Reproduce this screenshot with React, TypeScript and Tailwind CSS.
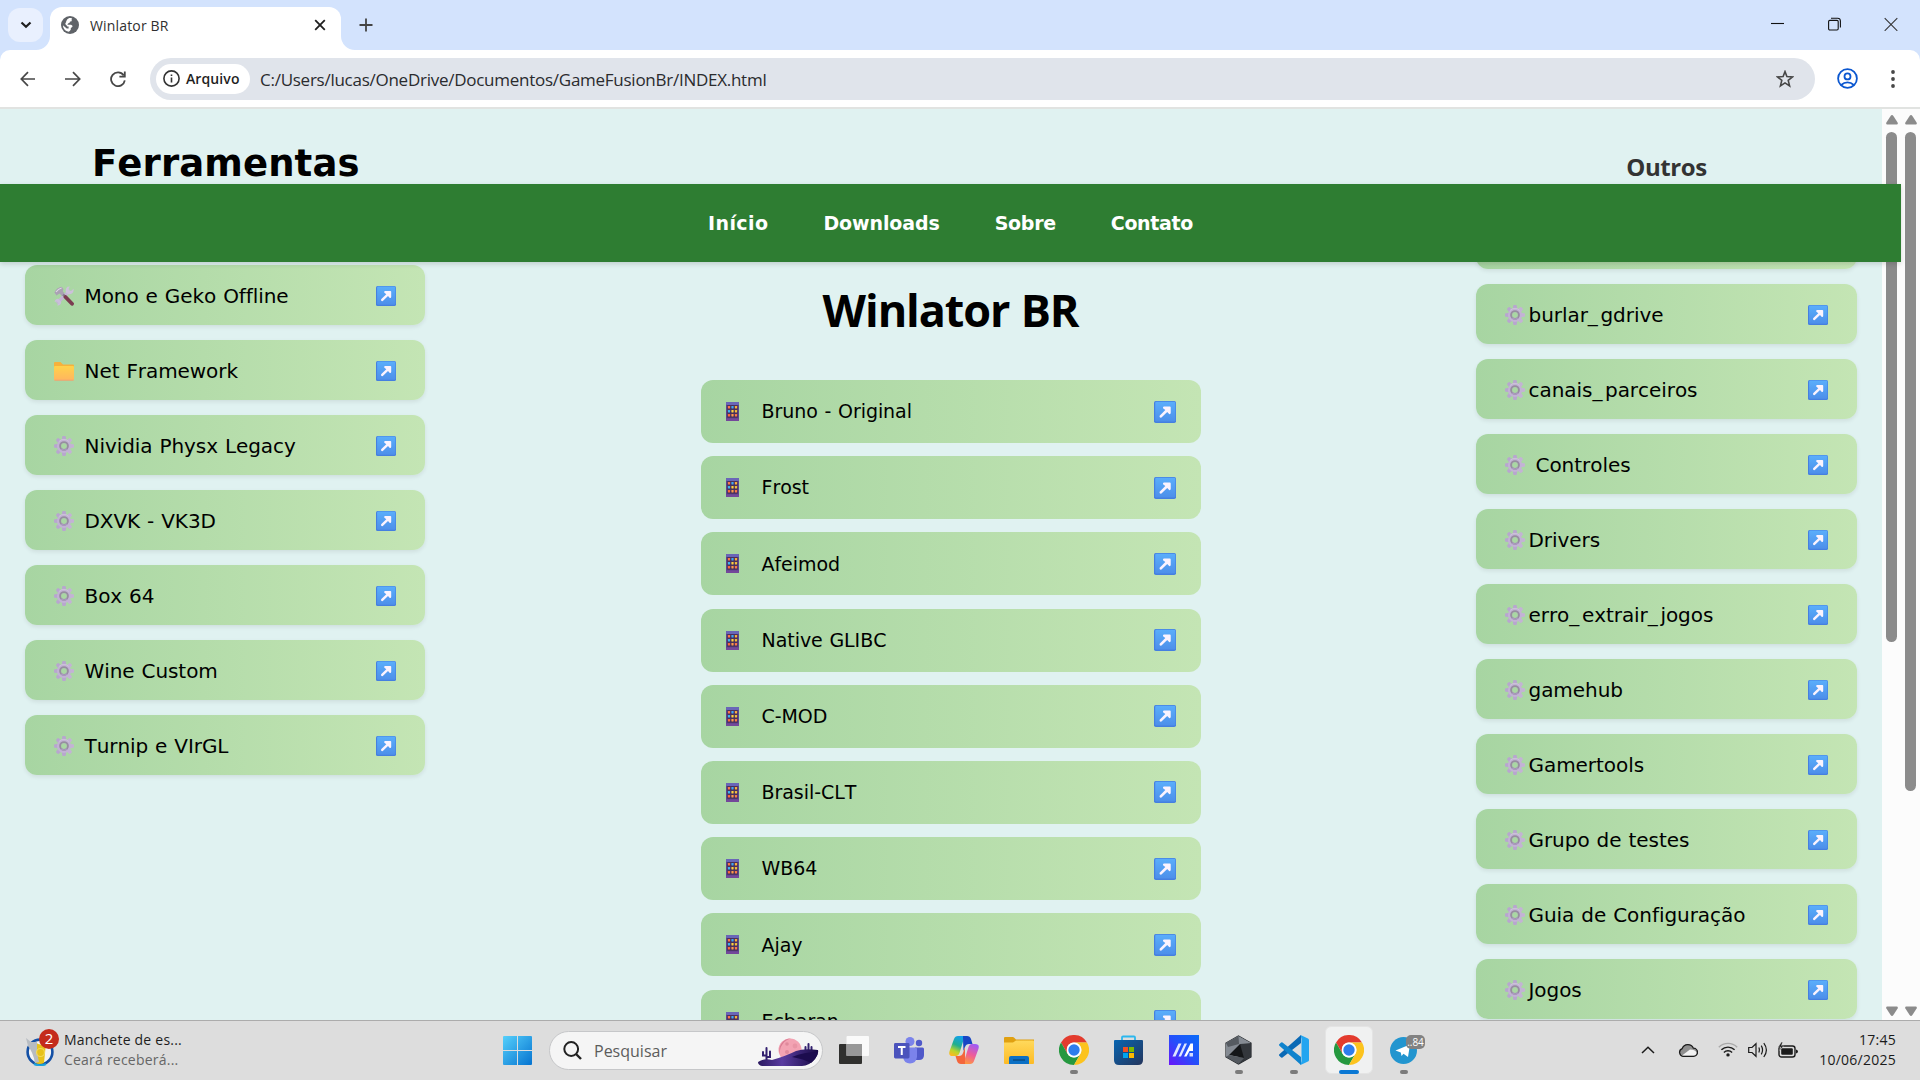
import React from "react";

type Kind = "gear" | "folder" | "tools";

const tools: { kind: Kind; label: string }[] = [
  { kind: "tools", label: "Mono e Geko Offline" },
  { kind: "folder", label: "Net Framework" },
  { kind: "gear", label: "Nividia Physx Legacy" },
  { kind: "gear", label: "DXVK - VK3D" },
  { kind: "gear", label: "Box 64" },
  { kind: "gear", label: "Wine Custom" },
  { kind: "gear", label: "Turnip e VIrGL" },
];
const builds = ["Bruno - Original", "Frost", "Afeimod", "Native GLIBC", "C-MOD", "Brasil-CLT", "WB64", "Ajay", "Ecbaran"];
const others = ["", "burlar_gdrive", "canais_parceiros", "\u00a0Controles", "Drivers", "erro_extrair_jogos", "gamehub", "Gamertools", "Grupo de testes", "Guia de Configuração", "Jogos"];

function Gear() {
  const teeth = [0, 45, 90, 135, 180, 225, 270, 315];
  return (
    <svg width="20" height="20" viewBox="0 0 20 20" className="shrink-0">
      {teeth.map((a) => (
        <path key={a} d="M7.8 5L8.2 .8Q8.4 0 9.1 0H10.9Q11.6 0 11.8 .8L12.2 5z" fill={a > 0 && a < 180 ? "#c3b3d4" : "#b8a6cf"} transform={`rotate(${a} 10 10)`} />
      ))}
      <circle cx="10" cy="10" r="5.1" fill="none" stroke="#c2b3d5" strokeWidth="4" />
      <path d="M5.2 5.4A6.4 6.4 0 0 1 14.800 5.600" fill="none" stroke="#cdc4d8" strokeWidth="1" />
      <circle cx="10" cy="10" r="3.900" fill="none" stroke="#978ea0" strokeWidth="1.900" />
      <path d="M7.300 12.900a4 4 0 0 0 5.600-.2" fill="none" stroke="#ab9ac0" strokeWidth="1.500" />
    </svg>
  );
}

function Folder() {
  return (
    <svg width="20" height="20" viewBox="0 0 20 20" className="shrink-0">
      <defs>
        <linearGradient id="emojiFolder" x1="0" y1="0" x2="0" y2="1">
          <stop offset="0" stopColor="#ffd24a" />
          <stop offset="1" stopColor="#ffb560" />
        </linearGradient>
      </defs>
      <path d="M0 2Q0 1 1 1H6.5L9 3.4H19Q20 3.4 20 4.4V10H0z" fill="#f6b13c" />
      <rect x="0" y="5" width="20" height="14.6" rx="1" fill="url(#emojiFolder)" />
      <path d="M.5 19.2H19.5" stroke="#ee9d75" strokeWidth=".8" />
    </svg>
  );
}

function Tools() {
  return (
    <svg width="20" height="20" viewBox="0 0 20 20" className="shrink-0">
      <path d="M4 16L15 5.500" stroke="#c3b6d3" strokeWidth="3.600" strokeLinecap="round" />
      <path d="M13.600 .8Q10.800 3.400 12 6.800Q15 9.600 18.600 7Q20 5 19.600 2.800L17 5L15 4.600L14.600 2.800L15.800 .6z" fill="#cdc1da" />
      <path d="M.6 16Q1 13 4.200 12.800L7.200 15.800Q7.200 19 4.200 19.600L3 19.200L4.600 17.600L4 16L2.400 15.400z" fill="#cabedb" />
      <path d="M8 7.3L12 11.5" stroke="#857a8e" strokeWidth="2.400" />
      <path d="M11.5 11L18 17.8" stroke="#7b3c50" strokeWidth="3.800" strokeLinecap="round" />
      <path d="M.4 6.4Q2.6 1.6 7.6 .8L9.4 3L8.8 5.2L10.4 7.2L7.8 9.8L5.6 7.6L3.8 8.4L2.6 9.6z" fill="#aaa1b4" />
      <path d="M2 6Q4.4 2.6 7.6 2" stroke="#e0d9e6" strokeWidth="1.200" fill="none" />
    </svg>
  );
}

function Phone() {
  const dots = ["#ff7a4a", "#3fa8f5", "#ffb13d", "#3fb4f5", "#ffd23d", "#f5c03d", "#ff6a3d", "#ff9a4a", "#ff7a4a"];
  return (
    <svg width="13" height="19" viewBox="0 0 13 19" className="shrink-0">
      <rect width="13" height="19" rx=".8" fill="#5c4590" />
      <rect width="13" height="3" rx=".8" fill="#6a66b8" />
      <rect x="1.2" y="3" width="10.6" height="12.800" fill="#49305c" />
      {dots.map((c, i) => (
        <rect key={i} x={1.900 + (i % 3) * 3.500} y={4.100 + Math.floor(i / 3) * 4} width="2.200" height="2.400" rx=".4" fill={c} />
      ))}
      <rect y="16.6" width="13" height="2.4" rx=".8" fill="#74479a" />
    </svg>
  );
}

function Arrow({ size }: { size: number }) {
  return (
    <svg width={size} height={size} viewBox="0 0 20 20" className="shrink-0">
      <defs>
        <linearGradient id="arrowFill" x1="0" y1="0" x2="0" y2="1">
          <stop offset="0" stopColor="#5aaefb" />
          <stop offset="1" stopColor="#4d8fea" />
        </linearGradient>
      </defs>
      <rect width="20" height="20" rx="1.6" fill="#457fe0" />
      <rect x="1.1" y=".6" width="18.3" height="18.1" rx="1.2" fill="url(#arrowFill)" />
      <path d="M5.1 13.3L10.3 8.2L8.2 6.5Q7.9 5 9 5H14.4Q15.2 5 15.2 5.8V11Q15.1 12.2 13.8 11.9L12 10L6.8 15.1Q5.6 15.4 5.1 14.6z" fill="#fbf3fe" />
    </svg>
  );
}

function KindIcon({ kind }: { kind: Kind }) {
  if (kind === "folder") return <Folder />;
  if (kind === "tools") return <Tools />;
  return <Gear />;
}

function Label({ text }: { text: string }) {
  return (
    <>
      {text.split("_").map((part, i) => (
        <React.Fragment key={i}>
          {i > 0 && <span className="tracking-[2.6px]">_</span>}
          {part}
        </React.Fragment>
      ))}
    </>
  );
}

function SideRow({ kind, label, gap }: { kind: Kind; label: string; gap: "wide" | "tight" }) {
  return (
    <div className="flex h-[60px] shrink-0 items-center rounded-xl bg-linear-to-r from-[#a7d5a2] to-[#c4e5b4] px-[29px] pt-0.5 shadow-[0_2px_4px_rgba(0,0,0,0.08)]">
      <KindIcon kind={kind} />
      <span className={gap === "wide" ? "ml-[10.5px] flex-1 text-[20px] tracking-[-0.07px] whitespace-pre" : "ml-[3.5px] flex-1 text-[20px] tracking-[-0.05px] whitespace-pre"}>
        <Label text={label} />
      </span>
      <Arrow size={20} />
    </div>
  );
}

function ScrollBar({ long }: { long?: boolean }) {
  return (
    <div className="flex h-full w-[19px] flex-col items-center bg-[#fcfcfc] pt-[6px] pb-[4px]">
      <svg width="12" height="10" viewBox="0 0 12 10"><path d="M6 0Q6.8 0 7.4.9L11.6 7.4Q12.4 9.6 10.6 9.6H1.4Q-.4 9.6.4 7.4L4.6.9Q5.2 0 6 0z" fill="#8b8b8b" /></svg>
      <div className={long ? "mt-[7px] h-[659px] w-[11px] rounded-full bg-[#8b8b8b]" : "mt-[7px] h-[510px] w-[11px] rounded-full bg-[#8b8b8b]"} />
      <svg width="12" height="10" viewBox="0 0 12 10" className="mt-auto"><path d="M6 10Q6.8 10 7.4 9.1L11.6 2.6Q12.4.4 10.6.4H1.4Q-.4.4.4 2.6L4.6 9.1Q5.2 10 6 10z" fill="#8b8b8b" /></svg>
    </div>
  );
}

function BrowserChrome() {
  return (
    <header className="h-[109px] shrink-0 bg-[#d3e3fd] font-['Open_Sans',sans-serif]">
      <div className="flex h-[50px] pl-2">
        <div className="mt-2 flex h-[34px] w-[35px] items-center justify-center rounded-xl bg-[#e9f0fe]">
          <svg width="12" height="8" viewBox="0 0 12 8"><path d="M1.5 1.5L6 5.8L10.5 1.5" fill="none" stroke="#1f1f1f" strokeWidth="2.2" /></svg>
        </div>
        <svg width="14" height="14" viewBox="0 0 14 14" className="-ml-[7px] self-end"><path d="M14 0V14H0A14 14 0 0 0 14 0z" fill="#fff" /></svg>
        <div className="mt-[7px] flex h-[43px] w-[291px] items-center rounded-t-[12px] bg-white pb-[7px] pl-[11px]">
          <svg width="18" height="18" viewBox="0 0 18 18">
            <circle cx="9" cy="9" r="9" fill="#5f6368" />
            <path d="M8.200 2.100Q10.500 1.600 11.200 2.400Q10.200 3.400 10.800 4.400Q10.600 5.600 9 5.600Q9.200 7.200 7 7.400L6.400 8.700H10Q11.800 9 11.500 10.800Q10.600 11.600 9.800 11.900V13.400Q9.200 14.800 7.800 15.800Q4 15.400 2.300 11.600L1.900 9.300L5.700 12.400H7.600V10.600Q5.900 10.600 5.700 9.400Q4.200 9 4.300 7Q5.400 6.600 5.200 5.200Q6 3 8.200 2.100z" fill="#fff" />
          </svg>
          <span className="ml-[11px] flex-1 pt-px text-[14px] tracking-[0.16px] text-[#303030]">Winlator BR</span>
          <svg width="12" height="12" viewBox="0 0 12 12" className="mr-[15px]"><path d="M1.2 1.2L10.8 10.8M10.8 1.2L1.2 10.8" stroke="#1f1f1f" strokeWidth="1.8" /></svg>
        </div>
        <svg width="14" height="14" viewBox="0 0 14 14" className="self-end"><path d="M0 0V14H14A14 14 0 0 1 0 0z" fill="#fff" /></svg>
        <svg width="14" height="14" viewBox="0 0 14 14" className="mt-[18px] ml-[4px]"><path d="M7 .5V13.5M.5 7H13.5" stroke="#444" strokeWidth="1.8" /></svg>
        <div className="mt-[17px] mr-[22px] ml-auto flex items-start gap-[43.5px]">
          <svg width="13" height="14" viewBox="0 0 13 14"><path d="M0 6.5H13" stroke="#111" strokeWidth="1.1" /></svg>
          <svg width="13" height="14" viewBox="0 0 13 14" fill="none" stroke="#111" strokeWidth="1.1"><rect x=".6" y="3.4" width="9.6" height="9.6" rx="1.2" /><path d="M3 1.2H9.6Q12.4 1.2 12.4 4V10.6" /></svg>
          <svg width="14" height="14" viewBox="0 0 14 14"><path d="M.7 1.2L13.3 13.8M13.3 1.2L.7 13.8" stroke="#333" strokeWidth="1.1" /></svg>
        </div>
      </div>
      <div className="flex h-[59px] items-center rounded-t-[10px] border-b-2 border-[#e1e3e1] bg-white pl-5">
        <svg width="16" height="16" viewBox="0 0 16 16" fill="none" stroke="#474747" strokeWidth="1.7"><path d="M15 8H1.4M8 1.2L1.3 8L8 14.8" /></svg>
        <svg width="16" height="16" viewBox="0 0 16 16" fill="none" stroke="#474747" strokeWidth="1.7" className="ml-[28.5px]"><path d="M0 8H14.6M8 1.2L14.7 8L8 14.8" /></svg>
        <svg width="16" height="16" viewBox="0 0 16 16" fill="none" stroke="#474747" strokeWidth="1.8" className="ml-[29px]"><path d="M13.6 4.2A6.9 6.9 0 1 0 14.8 9.4M14.8 .4V5.6H9.4" /></svg>
        <div className="ml-[24.5px] flex h-[42px] w-[1665px] items-center rounded-full bg-[#e0e4eb] pr-[21px] pl-1.5">
          <div className="flex h-[30px] w-[94px] items-center rounded-full bg-white pl-[7px]">
            <svg width="17" height="17" viewBox="0 0 17 17"><circle cx="8.5" cy="8.5" r="7.6" fill="none" stroke="#333" strokeWidth="1.6" /><path d="M8.5 7.6V12.4M8.5 4.4V6" stroke="#333" strokeWidth="1.6" /></svg>
            <span className="ml-[6px] text-[14px] font-semibold tracking-[0.1px] text-[#1f1f1f]">Arquivo</span>
          </div>
          <span className="ml-[10px] flex-1 pt-[3px] text-[17px] tracking-[-0.26px] text-[#2a2b2e]">C:/Users/lucas/OneDrive/Documentos/GameFusionBr/INDEX.html</span>
          <svg width="18" height="18" viewBox="0 0 18 18"><path d="M9 1.6L10.9 6.6L16.4 7L12.2 10.4L13.6 15.9L9 12.9L4.4 15.9L5.8 10.4L1.6 7L7.1 6.6z" fill="none" stroke="#474747" strokeWidth="1.6" /></svg>
        </div>
        <svg width="21" height="21" viewBox="0 0 21 21" fill="none" stroke="#0b57d0" strokeWidth="1.8" className="ml-[22px]"><circle cx="10.5" cy="10.5" r="9.4" /><circle cx="10.5" cy="8.4" r="3" /><path d="M4.2 17Q7 14.3 10.5 14.3T16.8 17" /></svg>
        <svg width="4" height="18" viewBox="0 0 4 18" className="ml-[32.5px]" fill="#474747"><circle cx="2" cy="2" r="1.9" /><circle cx="2" cy="9" r="1.9" /><circle cx="2" cy="16" r="1.9" /></svg>
      </div>
    </header>
  );
}

function ChromeLogo() {
  return (
    <svg width="30" height="30" viewBox="0 0 30 30">
      <path d="M2 7.5A15 15 0 0 1 28 7.5H15A7.5 7.5 0 0 0 8.5 11.25L8.5 18.7z" fill="#e33b2e" />
      <path d="M2 7.5A15 15 0 0 0 15 30L21.5 18.75A7.5 7.5 0 0 1 8.5 18.75z" fill="#25983f" />
      <path d="M28 7.5A15 15 0 0 1 15 30L21.5 18.75A7.5 7.5 0 0 0 15 7.5z" fill="#fcc31e" />
      <circle cx="15" cy="15" r="7.4" fill="#fff" />
      <circle cx="15" cy="15" r="5.7" fill="#2f7ded" />
    </svg>
  );
}

function Slot({ children, running, active }: { children: React.ReactNode; running?: boolean; active?: boolean }) {
  return (
    <div className="flex w-[55px] justify-center">
      <div className={active ? "mt-[5px] flex h-[48px] w-[48px] flex-col items-center rounded-md border border-[#e4e4e4] bg-[#f0f1f1] pt-[8px]" : "flex flex-col items-center pt-[14px]"}>
        <div className="flex h-[30px] items-center justify-center">{children}</div>
        {running && <div className="mt-[5px] h-1 w-2 rounded-full bg-[#7b7b7b]" />}
        {active && <div className="mt-[5px] h-1 w-5 shrink-0 rounded-full bg-[#0a78d4]" />}
      </div>
    </div>
  );
}

function Taskbar() {
  return (
    <footer className="flex h-[60px] shrink-0 border-t border-[#acacac] bg-[#dddddd] font-['Open_Sans',sans-serif]">
      <div className="flex w-[490px] items-center pb-0.5 pl-[26px]">
        <div className="relative h-[38px] w-[28px]">
          <svg width="28" height="28" viewBox="0 0 28 28" className="mt-[7px]">
            <circle cx="14" cy="14" r="12.4" fill="#f4f4f4" stroke="#1450a5" strokeWidth="2.6" />
            <path d="M9 4Q15 9 20 5L18 25Q14 27 9 25z" fill="#e7c21b" />
            <path d="M0 0L5 4L11 4L11 14L13 24L9 25Q7 14 2 8z" fill="#b7bcc2" />
            <circle cx="14.5" cy="14.5" r="4" fill="none" stroke="#f2d95a" strokeWidth="1.2" />
            <path d="M8 26Q14 28.5 20 26" stroke="#1ba3dd" strokeWidth="2" fill="none" />
          </svg>
          <div className="absolute -top-[2px] left-[13px] flex h-5 w-5 items-center justify-center rounded-full bg-[#c42b1c] text-[15px] leading-none text-white">2</div>
        </div>
        <div className="ml-[10px] flex flex-col text-[14px] leading-[20px] tracking-[0.22px]">
          <span className="text-[#1d1d1d]">Manchete de es...</span>
          <span className="text-[#666]">Ceará receberá...</span>
        </div>
      </div>
      <Slot>
        <svg width="29" height="29" viewBox="0 0 29 29">
          <defs><linearGradient id="winFill" x1="0" y1="0" x2="1" y2="1"><stop offset="0" stopColor="#56d0fb" /><stop offset="1" stopColor="#0573d0" /></linearGradient></defs>
          <path d="M1 0H14V14H0V1Q0 0 1 0zM15 0H28Q29 0 29 1V14H15zM0 15H14V29H1Q0 29 0 28zM15 15H29V28Q29 29 28 29H15z" fill="url(#winFill)" />
        </svg>
      </Slot>
      <div className="mt-[10px] mr-[3px] ml-[4px] flex h-[39px] w-[274px] items-center overflow-hidden rounded-full border border-[#c6c7c9] bg-[#f5f5f5] pl-[13px]">
        <svg width="19" height="19" viewBox="0 0 19 19" fill="none" stroke="#222" strokeWidth="2"><circle cx="8.2" cy="8" r="6.9" /><path d="M13 13L18 18" strokeWidth="2.4" /></svg>
        <span className="ml-[12px] flex-1 text-[16px] text-[#5c5c5c]">Pesquisar</span>
        <svg width="62" height="29" viewBox="0 0 62 29" className="mt-[3px] mr-[2px]">
          <defs><linearGradient id="dune" x1="0" y1="0" x2="1" y2="0"><stop offset="0" stopColor="#2b1a60" /><stop offset=".4" stopColor="#5a3ca0" /><stop offset="1" stopColor="#170a45" /></linearGradient></defs>
          <circle cx="32" cy="12" r="11.5" fill="#f3a3b3" />
          <path d="M22 16A11.5 11.5 0 0 1 33 .6A14 14 0 0 0 22 16z" fill="#d97c93" />
          <circle cx="29" cy="6" r="1.8" fill="#e08a9c" /><circle cx="37" cy="8" r="2.4" fill="#e995a6" /><circle cx="29" cy="14" r="2" fill="#e08a9c" />
          <path d="M8.500 25V10M8.500 17.500H5V14M8.500 19H12V13.500M50.500 16V6M50.500 13H47.500V9M50.500 14H53.500V9" fill="none" stroke="#33206f" strokeWidth="2" strokeLinecap="round" />
          <path d="M0 24Q6 20 14 22Q28 18 38 13Q46 10 60 12Q61 16 57 21Q51 28 44 28H4Q0 27 0 24z" fill="url(#dune)" />
          <path d="M34 19Q46 14 60 14Q59 20 53 25Q46 21 34 19z" fill="#1c0c4e" />
        </svg>
      </div>
      <Slot>
        <svg width="30" height="28" viewBox="0 0 30 28"><rect y="8" width="23" height="20" rx="1" fill="#30302e" /><rect x="7.500" y="0" width="22.500" height="20" rx="1" fill="#fff" fillOpacity=".85" /><path d="M7.500 8H23V20H7.500z" fill="#989898" /></svg>
      </Slot>
      <Slot>
        <svg width="30" height="27" viewBox="0 0 30 27"><circle cx="16" cy="4.500" r="4.500" fill="#7b83eb" /><circle cx="25" cy="6" r="3.200" fill="#5059c9" /><path d="M21 10.500H28.500Q30 10.500 30 12V18Q30 23 25 23H21z" fill="#5059c9" /><path d="M9 10.500H21.500Q23 10.500 23 12V20Q22 26.500 16 26.500T9 20z" fill="#7b83eb" /><rect y="6" width="15.500" height="15.500" rx="1.400" fill="#4b53bc" /><path d="M4 10H11.500M7.750 10V18" stroke="#fff" strokeWidth="2" /></svg>
      </Slot>
      <Slot>
        <svg width="30" height="28" viewBox="0 0 30 28">
          <defs>
            <linearGradient id="copA" x1=".6" y1="0" x2=".2" y2="1"><stop offset="0" stopColor="#12a0ee" /><stop offset=".45" stopColor="#1fae8f" /><stop offset=".75" stopColor="#b9d52c" /><stop offset="1" stopColor="#ffb820" /></linearGradient>
            <linearGradient id="copB" x1=".7" y1="0" x2=".3" y2="1"><stop offset="0" stopColor="#a05bf5" /><stop offset=".5" stopColor="#ee5b9a" /><stop offset="1" stopColor="#ff9a3c" /></linearGradient>
          </defs>
          <path d="M18 0H9Q6 0 5 3L.6 15Q-1 20 4 20H7.500Q9.500 20 10.500 17L14.500 4Q15.500 0 18 0z" fill="url(#copA)" />
          <path d="M14 0H18Q21 0 22 3L23.500 8H20Q17 8 16 11L14.500 15Q14 6 14 0z" fill="#1746c4" />
          <path d="M12 28H21Q24 28 25 25L29.400 13Q31 8 26 8H22.500Q20.500 8 19.500 11L15.500 24Q14.500 28 12 28z" fill="url(#copB)" />
          <path d="M16 28H12Q9 28 8 25L6.500 20H10Q13 20 14 17L16 11Q16 22 16 28z" fill="#f4663c" />
        </svg>
      </Slot>
      <Slot>
        <svg width="30" height="28" viewBox="0 0 30 28"><defs><linearGradient id="expl" x1="0" y1="0" x2="0" y2="1"><stop offset="0" stopColor="#ffd95c" /><stop offset="1" stopColor="#fdbb25" /></linearGradient></defs><path d="M0 2Q0 1 1 1H9Q10 1 12 3.500H30V9H0z" fill="#e0a011" /><path d="M0 6.500H9L12 4.500H29Q30 4.500 30 5.500V27Q30 28 29 28H1Q0 28 0 27z" fill="url(#expl)" /><path d="M5 28V22Q5 20 7 20H23Q25 20 25 22V28z" fill="#0b70c5" /><path d="M9 24H21" stroke="#0a4a80" strokeWidth="1.400" /></svg>
      </Slot>
      <Slot running><ChromeLogo /></Slot>
      <Slot>
        <svg width="29" height="30" viewBox="0 0 29 30"><defs><linearGradient id="store" x1="0" y1="0" x2="1" y2="1"><stop offset="0" stopColor="#0865b1" /><stop offset="1" stopColor="#24355c" /></linearGradient></defs><path d="M8 7V2.500Q8 1.500 9 1.500H20Q21 1.500 21 2.500V7" fill="none" stroke="#2bb7ee" strokeWidth="1.800" /><path d="M0 6Q0 5 1 5H28Q29 5 29 6V25Q29 30 24 30H5Q0 30 0 25z" fill="url(#store)" /><path d="M9 12H14V17H9z" fill="#f25022" /><path d="M15 12H20V17H15z" fill="#7fba00" /><path d="M9 18H14V23H9z" fill="#00a4ef" /><path d="M15 18H20V23H15z" fill="#ffb900" /></svg>
      </Slot>
      <Slot>
        <svg width="30" height="30" viewBox="0 0 30 30"><defs><linearGradient id="myasus" x1="1" y1="0" x2="0" y2="1"><stop offset="0" stopColor="#0a6cf8" /><stop offset=".5" stopColor="#2450fb" /><stop offset="1" stopColor="#6a14fa" /></linearGradient></defs><rect width="30" height="30" fill="url(#myasus)" /><path d="M3.500 21.500L9.500 8.500H12.500L6.500 21.500zM9.500 21.500L15.500 8.500H18L12 21.500z" fill="#dfe6ff" /><path d="M15 21.500L21.500 8.500H24V16H20.500L17.500 21.500z" fill="#fff" /><path d="M20.500 21.500V18H24V21.500z" fill="#d3dcff" /></svg>
      </Slot>
      <Slot running>
        <svg width="27" height="30" viewBox="0 0 27 30"><path d="M13.500 1L26 8V22L13.500 29L1 22V8z" fill="#a0a6ad" stroke="#23262a" strokeWidth="1.200" /><path d="M13.500 1L26 8L15 9L3 21L1 22V8z" fill="#858b93" /><path d="M1 8L13.500 1L14 9L3 12z" fill="#565b61" /><path d="M26 8V22L13.500 29L15 9z" fill="#33373c" /><path d="M15 9L4 20L19 23z" fill="#141618" /><path d="M1 22L4 20L19 23L13.500 29z" fill="#53585e" /></svg>
      </Slot>
      <Slot running>
        <svg width="30" height="30" viewBox="0 0 30 30"><path d="M21.500 0L29 3.500Q30 4 30 5V25Q30 26 29 26.500L21.500 30L22.500 26V4z" fill="#23a5f0" /><path d="M22 0V8L3.500 22.500Q2.500 23 1.800 22.300L.3 20.800Q-.4 20 .4 19.300z" fill="#0a69b5" /><path d="M22 30V22L3.500 7.500Q2.500 7 1.800 7.700L.3 9.200Q-.4 10 .4 10.700z" fill="#0f83cd" /></svg>
      </Slot>
      <Slot active><ChromeLogo /></Slot>
      <Slot running>
        <div className="relative h-[27px] w-[27px]">
          <svg width="27" height="27" viewBox="0 0 27 27"><circle cx="13.500" cy="13.500" r="13.500" fill="#2295cf" /><path d="M5.500 13.500L20 7.500L18 20L13.500 16.800L11.500 19L10.800 15.500z" fill="#fff" /></svg>
          <div className="absolute -top-[2px] left-[16px] flex h-[14px] w-[19px] items-center justify-center rounded-[5px] bg-[#828282] text-[10px] leading-none text-white">..84</div>
        </div>
      </Slot>
      <div className="ml-auto flex items-center pr-[24px] pb-0.5">
        <svg width="14" height="8" viewBox="0 0 14 8"><path d="M1 7L7 1.200L13 7" fill="none" stroke="#1b1b1b" strokeWidth="1.500" /></svg>
        <svg width="20" height="14" viewBox="0 0 20 14" className="ml-[23px]"><path d="M5 13.300A4 4 0 0 1 4.200 5.600A6 6 0 0 1 15.400 5.200A4 4 0 0 1 15.500 13.300z" fill="#8f8f8f" stroke="#1b1b1b" strokeWidth="1.300" /><path d="M4 12.600L12 6.500Q18 6.500 18.500 10Q18 12.600 15.500 12.600z" fill="#f2f2f2" /></svg>
        <svg width="20" height="15" viewBox="0 0 20 15" className="ml-[20px]" fill="none" stroke="#1b1b1b" strokeWidth="1.400"><path d="M.8 5.200A13 13 0 0 1 19.200 5.200" stroke="#aaa" /><path d="M3.400 7.800A9.400 9.400 0 0 1 16.600 7.800M5.900 10.400A5.800 5.800 0 0 1 14.100 10.400" /><circle cx="10" cy="12.900" r="1.700" fill="#1b1b1b" stroke="none" /></svg>
        <svg width="20" height="16" viewBox="0 0 20 16" className="ml-[10px]" fill="none" stroke="#1b1b1b" strokeWidth="1.200"><path d="M.7 5.500H4L8 1.700V14.300L4 10.500H.7z" /><path d="M10.800 5.600Q12 8 10.800 10.400M13.300 3.600Q15.800 8 13.300 12.400M15.800 1.200Q21 8 15.800 15" /></svg>
        <svg width="20" height="16" viewBox="0 0 20 16" className="ml-[10px]"><rect x="1" y="4" width="16" height="11" rx="2.500" fill="none" stroke="#1b1b1b" strokeWidth="1.400" /><rect x="3.200" y="6.200" width="11.600" height="6.600" rx="1" fill="#1b1b1b" /><path d="M18 7.500Q20 8 20 9.500T18 11.500z" fill="#1b1b1b" /><path d="M3.500 0L.3 5H2.800L1.800 8.600L5.600 3.800H3.400L4.600 0z" fill="#1b1b1b" stroke="#ddd" strokeWidth=".4" /></svg>
        <div className="ml-[18px] flex w-[80px] flex-col text-right text-[14px] leading-[20px] tracking-[0.25px] text-[#1b1b1b]">
          <span>17:45</span>
          <span>10/06/2025</span>
        </div>
      </div>
    </footer>
  );
}

export default function App() {
  return (
    <div className="flex h-[1080px] w-[1920px] flex-col overflow-hidden bg-[#e0f2f1] text-black">
      <BrowserChrome />
      <div className="relative flex min-h-0 flex-1 overflow-hidden font-['DejaVu_Sans',sans-serif] [font-kerning:none] [font-variant-ligatures:none] [word-spacing:0.7px]">
        <aside className="flex w-[450px] shrink-0 flex-col gap-[15px] px-[25px] pt-[31px]">
          <h2 className="mb-[55px] h-[55px] pl-[67px] text-[37px] leading-[48px] font-bold tracking-[0.1px]">Ferramentas</h2>
          {tools.map((t) => (
            <SideRow key={t.label} kind={t.kind} label={t.label} gap="wide" />
          ))}
        </aside>
        <main className="flex flex-1 flex-col items-center pt-[169px] pl-[1px]">
          <h1 className="h-[102px] shrink-0 font-['Open_Sans',sans-serif] text-[45px] leading-[64px] font-bold tracking-[-1.1px] [font-kerning:normal]">Winlator BR</h1>
          <div className="flex w-[500px] flex-col gap-[13.2px]">
            {builds.map((b) => (
              <div key={b} className="flex h-[63px] shrink-0 items-center rounded-xl bg-linear-to-r from-[#a7d5a2] to-[#c4e5b4] pr-[25px] pl-[25px]">
                <Phone />
                <span className="ml-[23px] flex-1 text-[19px] tracking-[-0.05px]">{b}</span>
                <Arrow size={22} />
              </div>
            ))}
          </div>
        </main>
        <aside className="flex w-[432px] shrink-0 flex-col gap-[15px] pt-[39px] pr-[25px] pl-[26px]">
          <h2 className="h-[46px] text-center font-['Open_Sans',sans-serif] text-[24px] leading-[38px] font-bold tracking-[-0.4px] text-[#333]">Outros</h2>
          {others.map((t, i) => (
            <SideRow key={i} kind="gear" label={t} gap="tight" />
          ))}
        </aside>
        <ScrollBar />
        <ScrollBar long />
        <nav className="absolute top-[75px] left-0 flex h-[78px] w-[1901px] items-center justify-center gap-[55px] bg-[#2e7d32] text-[19px] font-bold text-white shadow-[0_2px_5px_rgba(0,0,0,0.15)]">
          <span className="tracking-[0.4px]">Início</span>
          <span className="tracking-[-0.1px]">Downloads</span>
          <span className="tracking-[-0.3px]">Sobre</span>
          <span className="tracking-[-0.35px]">Contato</span>
        </nav>
      </div>
      <Taskbar />
    </div>
  );
}
